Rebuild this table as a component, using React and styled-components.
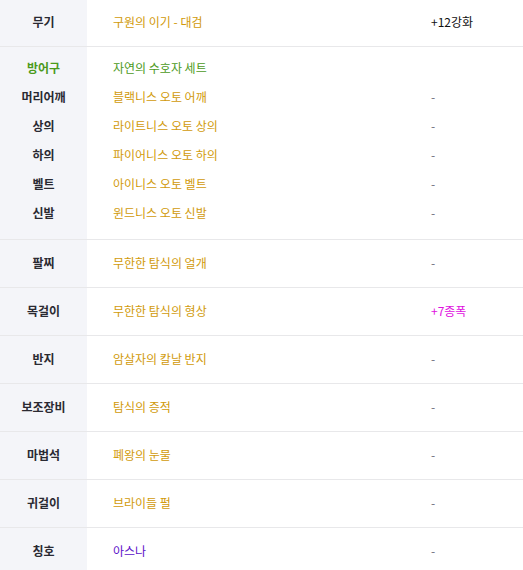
import React from 'react';
import styled, { createGlobalStyle } from 'styled-components';

const GlobalStyle = createGlobalStyle`
  html, body {
    margin: 0;
    padding: 0;
    background: #fff;
  }
  body {
    font-family: 'Noto Sans CJK KR', 'Noto Sans', sans-serif;
    font-size: 12px;
  }
`;

const groups = [
  {
    id: 'weapon',
    first: true,
    rows: [{ label: '무기', name: '구원의 이기 - 대검', tone: 'gold', extra: '+12강화', extraTone: 'black' }],
  },
  {
    id: 'armor',
    multi: true,
    rows: [
      { label: '방어구', labelTone: 'green', name: '자연의 수호자 세트', tone: 'green', extra: '' },
      { label: '머리어깨', name: '블랙니스 오토 어깨', tone: 'gold', extra: '-' },
      { label: '상의', name: '라이트니스 오토 상의', tone: 'gold', extra: '-' },
      { label: '하의', name: '파이어니스 오토 하의', tone: 'gold', extra: '-' },
      { label: '벨트', name: '아이니스 오토 벨트', tone: 'gold', extra: '-' },
      { label: '신발', name: '윈드니스 오토 신발', tone: 'gold', extra: '-' },
    ],
  },
  { id: 'wrist', rows: [{ label: '팔찌', name: '무한한 탐식의 얼개', tone: 'gold', extra: '-' }] },
  {
    id: 'neck',
    rows: [{ label: '목걸이', name: '무한한 탐식의 형상', tone: 'gold', extra: '+7종폭', extraTone: 'magenta' }],
  },
  { id: 'ring', rows: [{ label: '반지', name: '암살자의 칼날 반지', tone: 'gold', extra: '-' }] },
  { id: 'sub', rows: [{ label: '보조장비', name: '탐식의 증적', tone: 'gold', extra: '-' }] },
  { id: 'stone', rows: [{ label: '마법석', name: '폐왕의 눈물', tone: 'gold', extra: '-' }] },
  { id: 'ear', rows: [{ label: '귀걸이', name: '브라이들 펄', tone: 'gold', extra: '-' }] },
  { id: 'title', last: true, rows: [{ label: '칭호', name: '아스나', tone: 'purple', extra: '-' }] },
];

const tones = {
  gold: '#d19a0a',
  green: '#4c9a1c',
  purple: '#5a10c8',
  magenta: '#e010e0',
  black: '#111111',
  dash: '#6c6c7c',
  label: '#2a2a32',
};

const App = () => (
  <>
    <GlobalStyle />
    <Table>
      {groups.map((group) => (
        <Group key={group.id} $multi={group.multi} $first={group.first} $last={group.last}>
          {group.rows.map((row) => (
            <Row key={row.label} $multi={group.multi}>
              <Label $tone={row.labelTone || 'label'}>{row.label}</Label>
              <Name $tone={row.tone}>{row.name}</Name>
              <Extra $tone={row.extra === '-' ? 'dash' : row.extraTone}>{row.extra}</Extra>
            </Row>
          ))}
        </Group>
      ))}
    </Table>
  </>
);

const Table = styled.div`
  width: 523px;
  display: flex;
  flex-direction: column;
`;

const Group = styled.section`
  background: linear-gradient(to right, #f4f5f9 87px, #ffffff 87px);
  border-bottom: ${({ $last }) => ($last ? 'none' : '1px solid #e8e8ea')};
  padding: ${({ $multi }) => ($multi ? '7px 0 11px' : '0')};
  margin-top: ${({ $first }) => ($first ? '-1px' : '0')};
`;

const Row = styled.div`
  display: grid;
  grid-template-columns: 87px 344px 1fr;
  align-items: center;
  box-sizing: border-box;
  padding-bottom: 2px;
  height: ${({ $multi }) => ($multi ? '29px' : '47px')};
`;

const Label = styled.div`
  text-align: center;
  font-weight: 700;
  color: ${({ $tone }) => tones[$tone]};
`;

const Name = styled.div`
  padding-left: 26px;
  color: ${({ $tone }) => tones[$tone]};
`;

const Extra = styled.div`
  color: ${({ $tone }) => tones[$tone] || tones.black};
`;

export default App;
